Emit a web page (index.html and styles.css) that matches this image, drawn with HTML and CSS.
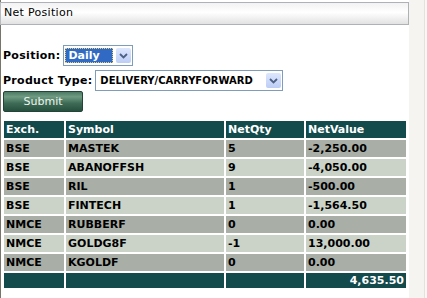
FILE: index.html
```html
<!DOCTYPE html>
<html lang="en">
  <head>
    <meta charset="UTF-8" />
    <title>Net Position</title>
    <link rel="stylesheet" href="styles.css">
  </head>
  <body>
    <div class="page">
      <div class="panel-title">Net Position</div>

      <form class="filter-form">
        <div class="field">
          <label>Position:</label>
          <span class="dropdown dropdown-short">
            <span class="dropdown-value selected">Daily</span>
            <span class="dropdown-arrow">
              <svg width="9" height="6" viewBox="0 0 9 6"><path d="M1 1 L4.5 4.5 L8 1" fill="none" stroke="#4d6185" stroke-width="1.8"/></svg>
            </span>
          </span>
        </div>
        <div class="field">
          <label>Product Type:</label>
          <span class="dropdown dropdown-long">
            <span class="dropdown-value">DELIVERY/CARRYFORWARD</span>
            <span class="dropdown-arrow">
              <svg width="9" height="6" viewBox="0 0 9 6"><path d="M1 1 L4.5 4.5 L8 1" fill="none" stroke="#4d6185" stroke-width="1.8"/></svg>
            </span>
          </span>
        </div>
        <button type="button" class="submit-btn">Submit</button>
      </form>

      <table class="positions">
        <thead>
          <tr>
            <th class="col-exch">Exch.</th>
            <th class="col-symbol">Symbol</th>
            <th class="col-qty">NetQty</th>
            <th class="col-value">NetValue</th>
          </tr>
        </thead>
        <tbody>
          <tr class="dark"><td>BSE</td><td>MASTEK</td><td>5</td><td>-2,250.00</td></tr>
          <tr class="light"><td>BSE</td><td>ABANOFFSH</td><td>9</td><td>-4,050.00</td></tr>
          <tr class="dark"><td>BSE</td><td>RIL</td><td>1</td><td>-500.00</td></tr>
          <tr class="light"><td>BSE</td><td>FINTECH</td><td>1</td><td>-1,564.50</td></tr>
          <tr class="dark"><td>NMCE</td><td>RUBBERF</td><td>0</td><td>0.00</td></tr>
          <tr class="light"><td>NMCE</td><td>GOLDG8F</td><td>-1</td><td>13,000.00</td></tr>
          <tr class="dark"><td>NMCE</td><td>KGOLDF</td><td>0</td><td>0.00</td></tr>
        </tbody>
        <tfoot>
          <tr><td></td><td></td><td></td><td class="total">4,635.50</td></tr>
        </tfoot>
      </table>
    </div>
    <div class="side-strip"></div>
  </body>
</html>
```

FILE: styles.css
```css
html, body {
  margin: 0;
  height: 100%;
}
body {
  display: flex;
  font-family: "DejaVu Sans", Verdana, sans-serif;
  font-size: 11px;
  background: #ffffff;
  overflow: hidden;
}
.page {
  width: 407px;
  padding-top: 2px;
  padding-left: 1px;
  border-left: 1px solid #77746a;
  box-sizing: content-box;
}
.panel-title {
  height: 21px;
  line-height: 19px;
  padding-left: 3px;
  margin-left: -2px;
  border: 1px solid #aeb2b6;
  border-left-color: #b8bcc0;
  background: linear-gradient(#f2f2f2, #ffffff 45%, #e2e2e2);
  color: #000;
  font-size: 11px;
  letter-spacing: 0.3px;
}
.filter-form {
  padding-top: 20px;
}
.field {
  display: flex;
  align-items: center;
  margin-bottom: 4px;
}
.field + .field {
  margin-bottom: 0;
}
.field label {
  font-weight: bold;
  padding-left: 1px;
  margin-right: 3px;
  letter-spacing: 0.3px;
}
.dropdown {
  display: flex;
  align-items: center;
  height: 17px;
  border: 1px solid #7f9db9;
  background: #fff;
  padding: 1px;
}
.dropdown-short {
  width: 66px;
}
.dropdown-long {
  width: 184px;
}
.dropdown-value {
  flex: 1;
  height: 15px;
  line-height: 15px;
  font-size: 10px;
  font-weight: bold;
  padding-left: 3px;
  margin-right: 3px;
  white-space: nowrap;
  overflow: hidden;
}
.dropdown-value.selected {
  font-size: 11px;
  background: #316ac5;
  color: #fff;
  outline: 1px dotted #e8d36a;
  outline-offset: -1px;
}
.dropdown-arrow {
  width: 15px;
  height: 15px;
  display: flex;
  align-items: center;
  justify-content: center;
  background: linear-gradient(#dde7fd, #bccdf6);
  border-radius: 2px;
}
.submit-btn {
  display: block;
  width: 80px;
  height: 21px;
  margin-left: 1px;
  border: 1px solid #22453a;
  border-radius: 2px;
  background: linear-gradient(#4c7a64, #6f9b82 25%, #3d6a55 60%, #27503f);
  color: #eef4ee;
  font-family: "DejaVu Sans", Verdana, sans-serif;
  font-size: 11px;
  padding: 0;
}
.positions {
  margin-top: 7px;
  width: 406px;
  border-collapse: separate;
  border-spacing: 2px;
}
.positions th,
.positions td {
  height: 17px;
  padding: 0 2px;
  text-align: left;
  font-weight: bold;
  white-space: nowrap;
}
.positions th {
  background: #134a4c;
  color: #fff;
}
.col-exch { width: 56px; }
.col-symbol { width: 154px; }
.col-qty { width: 74px; }
.positions tr.dark td {
  background: #a9aea6;
}
.positions tr.light td {
  background: #cbd3c8;
}
.positions tfoot td {
  height: 15px;
  background: #134a4c;
  color: #fff;
}
.positions td.total {
  text-align: right;
}
.side-strip {
  flex: 1;
  background: linear-gradient(90deg, #f5f4f0 0, #f5f4f0 15px, #e4e2da 15px, #e4e2da 16px, #f8f8f5 16px);
}
```
